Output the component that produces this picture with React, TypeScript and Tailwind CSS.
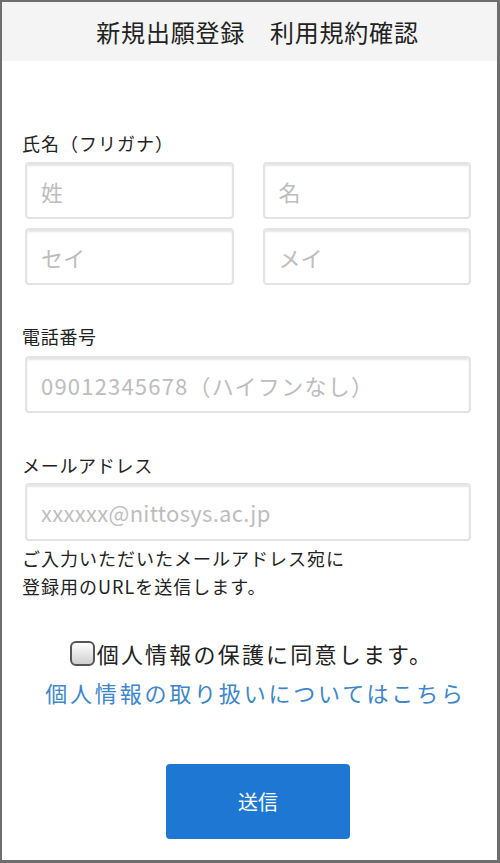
import { useState } from 'react';

const font = { fontFamily: '"Noto Sans CJK JP", "Noto Sans", sans-serif' };

const Field = ({ placeholder, className = '' }: { placeholder: string; className?: string }) => (
    <input
        placeholder={placeholder}
        className={`h-[57px] rounded-[4px] border-2 border-[#e4e4e4] bg-white px-[14px] text-[22px] text-[#333] shadow-[inset_0_2px_2px_rgba(0,0,0,0.10)] outline-none placeholder:text-[#bdbdbd] ${className}`}
    />
);

const App = () => {
    const [agree, setAgree] = useState(false);

    return (
        <div style={font} className="box-border flex h-[863px] w-[500px] flex-col border-t-2 border-l-2 border-r-[3px] border-b-[3px] border-[#6e6e6e] bg-white text-[#222]">
            {/* Header */}
            <div className="flex h-[59px] items-center justify-center bg-[#f4f4f4] pl-[16px] text-[24px] tracking-[0.8px] text-[#222]">
                新規出願登録　利用規約確認
            </div>

            <div className="flex flex-col pl-[20px] pr-[20px]">
                {/* Name */}
                <div className="mt-[70px] text-[18px] leading-[24px] tracking-[1px]">氏名（フリガナ）</div>
                <div className="mt-[7px] ml-[3px] mr-[6px] grid grid-cols-2 gap-x-[29px] gap-y-[9px]">
                    <Field placeholder="姓" />
                    <Field placeholder="名" />
                    <Field placeholder="セイ" />
                    <Field placeholder="メイ" />
                </div>

                {/* Phone */}
                <div className="mt-[39px] text-[18px] leading-[24px] tracking-[0.7px]">電話番号</div>
                <div className="mt-[8px] ml-[3px] mr-[6px] flex">
                    <Field placeholder="09012345678（ハイフンなし）" className="w-full tracking-[1.2px]" />
                </div>

                {/* Mail */}
                <div className="mt-[40px] text-[18px] leading-[24px] tracking-[0.7px]">メールアドレス</div>
                <div className="mt-[6px] ml-[3px] mr-[6px] flex">
                    <Field placeholder="xxxxxx@nittosys.ac.jp" className="h-[58px] w-full tracking-[0.3px]" />
                </div>
                <p className="mt-[3px] text-[18px] leading-[28px] tracking-[1px]">
                    ご入力いただいたメールアドレス宛に<br />
                    登録用のURLを送信します。
                </p>

                {/* Agree */}
                <label className="mt-[37px] flex cursor-pointer items-center justify-center pl-[4px] text-[22px] leading-[32px] tracking-[2.2px]">
                    <span
                        onClick={() => setAgree(!agree)}
                        className="mr-[2px] flex h-[25px] w-[25px] items-center justify-center rounded-[6px] border-2 border-[#555] bg-linear-to-b from-white to-[#cfcfcf] text-[16px] leading-none"
                    >
                        {agree ? '✓' : ''}
                    </span>
                    個人情報の保護に同意します。
                </label>
                <a href="#" className="mt-[7px] pl-[12px] text-center text-[22px] leading-[32px] tracking-[2.8px] text-[#3d86c9]">
                    個人情報の取り扱いについてはこちら
                </a>

                {/* Submit */}
                <div className="mt-[56px] flex justify-center pl-[17px]">
                    <button className="h-[75px] w-[184px] rounded-[4px] bg-[#1e78d3] text-[20px] text-white">
                        送信
                    </button>
                </div>
            </div>
        </div>
    );
};

export default App;
